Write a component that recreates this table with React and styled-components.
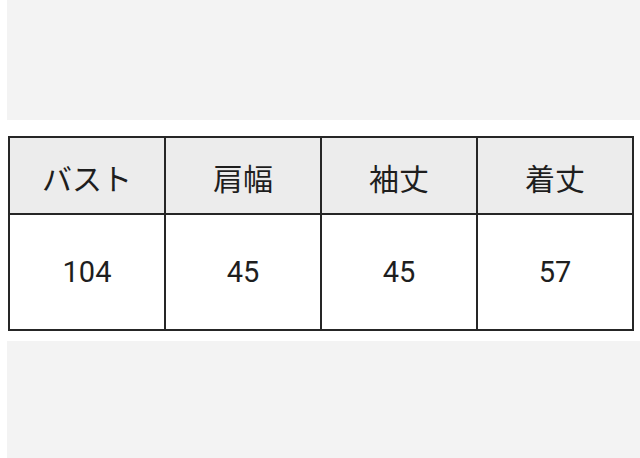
import React from 'react';
import styled, {createGlobalStyle} from 'styled-components';

const GlobalStyle = createGlobalStyle`
  body {
    margin: 0;
    background: #fff;
    font-family: Roboto, "Noto Sans CJK JP", sans-serif;
  }
`;

const Page = styled.div`
  width: 640px;
  height: 458px;
  overflow: hidden;
  display: flex;
  flex-direction: column;
`;

const GrayBlock = styled.div`
  margin-left: 7px;
  height: ${p => p.h}px;
  background: #f3f3f3;
  flex-shrink: 0;
`;

const SizeTable = styled.div`
  margin: ${p => p.top}px 0 ${p => p.bottom}px 8px;
  width: 626px;
  box-sizing: border-box;
  display: grid;
  grid-template-columns: repeat(4, 1fr);
  grid-template-rows: 75px 114px;
  gap: 2px;
  padding: 2px;
  background: #262626;
`;

const Cell = styled.div`
  display: flex;
  align-items: center;
  justify-content: center;
  background: ${p => (p.head ? '#ececec' : '#fff')};
  color: #1e1e1e;
  font-size: ${p => (p.head ? '30px' : '29px')};
  padding-top: ${p => (p.head ? '2px' : '0')};
`;

const heads = ['バスト', '肩幅', '袖丈', '着丈'];
const values = ['104', '45', '45', '57'];

const App = () => {
  return (
    <Page>
      <GlobalStyle />
      <GrayBlock h={120} />
      <SizeTable top={16} bottom={10}>
        {heads.map(h => <Cell head key={h}>{h}</Cell>)}
        {values.map((v, i) => <Cell key={i}>{v}</Cell>)}
      </SizeTable>
      <GrayBlock h={120} />
    </Page>
  );
};

App.displayName = 'App';
export default App;
